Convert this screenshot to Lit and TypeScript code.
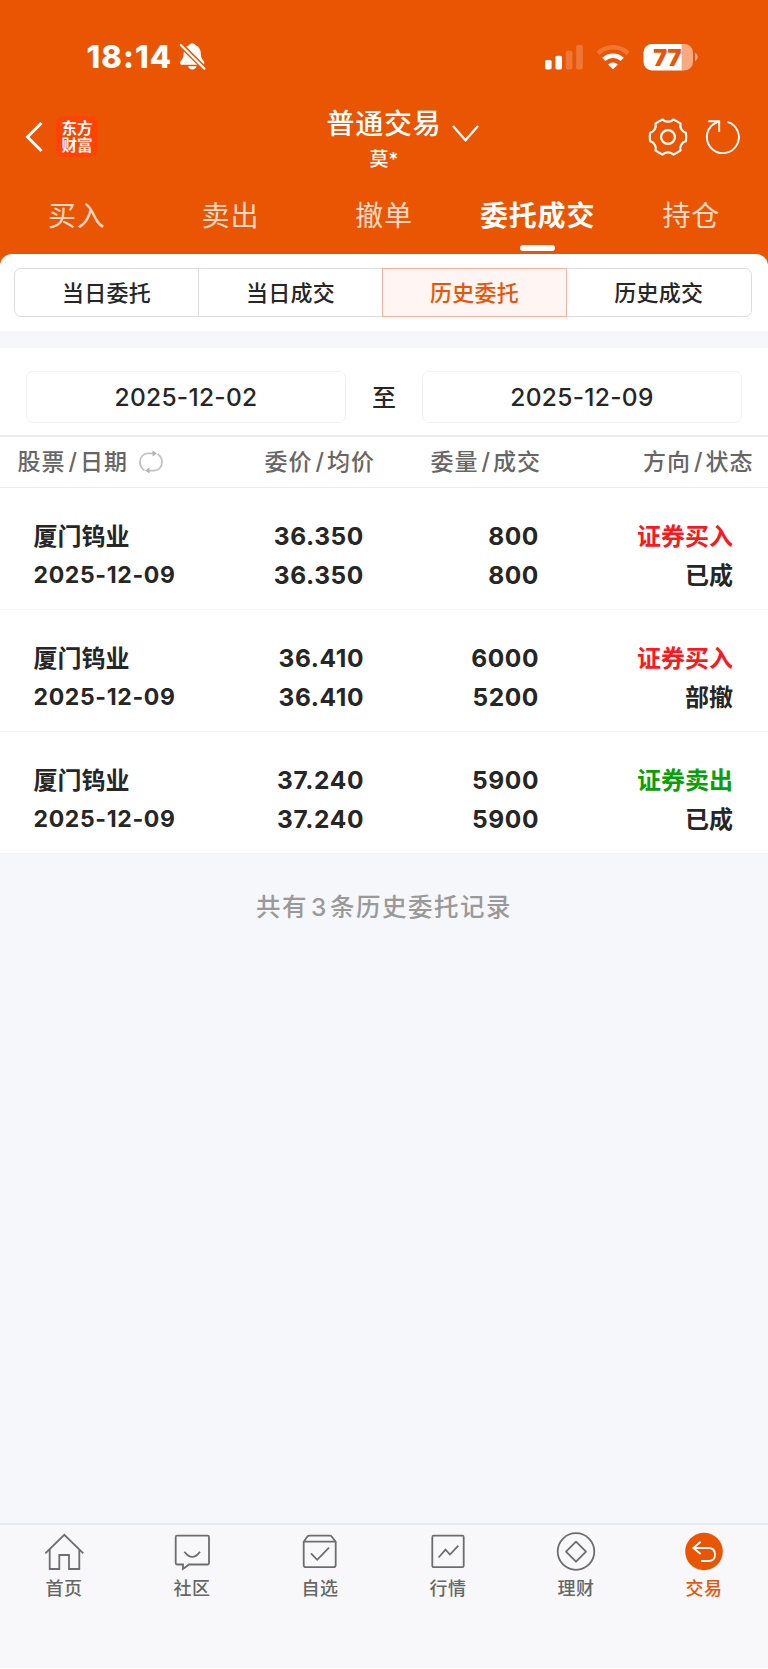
import { LitElement, html, css, svg } from "lit";
import { customElement } from "lit/decorators.js";
import { classMap } from "lit/directives/class-map.js";

const baseFont = css`
  :host {
    box-sizing: border-box;
    font-family: Inter, "Noto Sans CJK SC", sans-serif;
    white-space: nowrap;
  }
  * {
    box-sizing: border-box;
  }
  svg {
    display: block;
    flex: none;
    fill: none;
    overflow: visible;
  }
`;

/** Gear outline with six flat-topped lobes. */
const gearPath = (() => {
  const pt = (r: number, deg: number) => {
    const a = (deg * Math.PI) / 180;
    return `${(20 + r * Math.cos(a)).toFixed(2)} ${(20 + r * Math.sin(a)).toFixed(2)}`;
  };
  let d = "";
  for (let k = 0; k < 6; k++) {
    const a = k * 60;
    d += `${k ? "L" : "M"}${pt(18.4, a - 13)}Q${pt(18.4, a)} ${pt(18.4, a + 13)}`;
    d += `C${pt(16.2, a + 17)} ${pt(15.4, a + 23)} ${pt(15.4, a + 30)}`;
    d += `C${pt(15.4, a + 37)} ${pt(16.2, a + 43)} ${pt(18.4, a + 47)}`;
  }
  return d + "Z";
})();

@customElement("status-bar")
class StatusBar extends LitElement {
  static styles = [
    baseFont,
    css`
      :host {
        display: flex;
        align-items: center;
        height: 57px;
        padding: 0 69.5px 0 86.5px;
        margin-top: 28px;
        color: #fff;
      }
      .time {
        width: 87px;
        font-size: 31px;
        font-weight: 800;
        line-height: 40px;
        letter-spacing: 1.1px;
      }
      .bell {
        margin: 0 0 1px 5px;
      }
      .right {
        margin-left: auto;
        display: flex;
        align-items: center;
      }
      .wifi {
        margin-left: 13px;
      }
      .battery {
        margin-left: 13px;
      }
      .level {
        font: 900 23.500px Inter, sans-serif;
        fill: #ea5504;
      }
    `,
  ];
  render() {
    return html`
      <span class="time">18:14</span>
      <svg class="bell" width="27" height="28" viewBox="0 0 27 28">
        <path fill="#fff" d="M13.2 1.2c-1.8 0-2.8 1-3.3 2.1-3 1-5 3.6-5.200 7.200-.2 5-1 6.300-2.800 8.200-1.300 1.400-1.100 4 .9 4h20.800c2 0 2.200-2.600.9-4-1.800-1.900-2.600-3.200-2.800-8.200-.2-3.600-2.200-6.200-5.200-7.200-.5-1.100-1.500-2.100-3.300-2.100zM9 24.300h8.600c-.5 1.900-2.200 3.200-4.300 3.200S9.500 26.200 9 24.300z"/>
        <path stroke="#ea5504" stroke-width="5.200" d="M2 3.200L26 27"/>
        <path stroke="#fff" stroke-width="2.200" stroke-linecap="round" d="M1.800 3L25.400 26.600"/>
      </svg>
      <div class="right">
        <svg width="38" height="28" viewBox="0 0 38 28">
          <g fill="#fff">
            <rect y="17" width="6.600" height="9.400" rx="1.600" />
            <rect x="10.400" y="12.700" width="6.600" height="13.700" rx="1.600" />
            <rect x="20.800" y="7.700" width="6.600" height="18.700" rx="1.600" opacity=".2" />
            <rect x="31.200" y="2" width="6.600" height="24.400" rx="1.600" opacity=".2" />
          </g>
        </svg>
        <svg class="wifi" width="34" height="28" viewBox="0 0 34 28">
          <path stroke="#fff" stroke-opacity=".2" stroke-width="4.600" d="M2 10.400a21.500 21.500 0 0 1 30 0" />
          <path stroke="#fff" stroke-width="4.600" d="M7.700 16.400a13.500 13.500 0 0 1 18.600 0" />
          <path fill="#fff" d="M17 26.200l-4.900-4.700a7 7 0 0 1 9.800 0z" />
        </svg>
        <svg class="battery" width="56" height="28" viewBox="0 0 56 28">
          <defs>
            <clipPath id="cell"><rect x=".5" y="1" width="49.500" height="26.500" rx="8.500" /></clipPath>
          </defs>
          <g clip-path="url(#cell)">
            <rect x="0" y="0" width="38.800" height="28" fill="#fff" />
            <rect x="38.800" y="0" width="12" height="28" fill="#fff" fill-opacity=".5" />
          </g>
          <path fill="#fff" fill-opacity=".5" d="M52 9.600q2.800 1.600 2.800 4.400t-2.800 4.400z" />
          <text class="level" x="10.200" y="22.800">77</text>
        </svg>
      </div>
    `;
  }
}

@customElement("title-bar")
class TitleBar extends LitElement {
  static styles = [
    baseFont,
    css`
      :host {
        display: grid;
        grid-template-columns: 1fr auto 1fr;
        height: 90px;
        color: #fff;
      }
      .left,
      .right {
        display: flex;
        align-items: center;
        height: 104px;
      }
      .left {
        padding-left: 25px;
      }
      .logo {
        width: 42px;
        height: 41px;
        margin: 0 0 2px 12px;
        padding: 3px 5px 0 5.500px;
        border-radius: 8px;
        background: #ff4302;
        font: 700 15.500px/17.500px "Noto Sans CJK SC", sans-serif;
        white-space: normal;
      }
      .center {
        display: flex;
        flex-direction: column;
        align-items: center;
        padding-top: 18.500px;
      }
      .title {
        font-size: 28px;
        font-weight: 500;
        line-height: 40px;
        letter-spacing: 0.8px;
        position: relative;
      }
      .caret {
        position: absolute;
        left: 126px;
        top: 20px;
      }
      .user {
        font-size: 19px;
        font-weight: 500;
        line-height: 30px;
        margin-top: 1.500px;
      }
      .right {
        justify-content: flex-end;
        gap: 17px;
        padding-right: 27px;
      }
    `,
  ];
  render() {
    return html`
      <div class="left">
        <svg width="19" height="32" viewBox="0 0 19 32">
          <path stroke="#fff" stroke-width="3" d="M16.500 2L2.500 16L16.500 30" />
        </svg>
        <div class="logo">东方财富</div>
      </div>
      <div class="center">
        <div class="title">
          普通交易
          <svg class="caret" width="28" height="18" viewBox="0 0 28 18">
            <path stroke="#fff" stroke-width="2.300" d="M1 2L13.500 16.300L26 2" />
          </svg>
        </div>
        <div class="user">莫*</div>
      </div>
      <div class="right">
        <svg width="40" height="40" viewBox="0 0 40 40">
          <path stroke="#fff" stroke-width="2.200" stroke-linejoin="round" d=${gearPath} />
          <circle cx="20" cy="20" r="6.900" stroke="#fff" stroke-width="2.200" />
        </svg>
        <svg width="36" height="36" viewBox="0 0 36 36">
          <path stroke="#fff" stroke-width="1.900" d="M22.500 2.800A16 16 0 1 1 8.300 5.300L14 2.200M3.300 2.200H14.200V13" />
        </svg>
      </div>
    `;
  }
}

@customElement("trade-tabs")
class TradeTabs extends LitElement {
  static styles = [
    baseFont,
    css`
      :host {
        display: grid;
        grid-template-columns: repeat(5, 1fr);
        height: 79px;
      }
      .tab {
        display: flex;
        flex-direction: column;
        align-items: center;
        padding-top: 20.500px;
        font-size: 28px;
        line-height: 40px;
        letter-spacing: 0.8px;
        color: #ffdac5;
      }
      .active {
        color: #fff;
        font-weight: 700;
      }
      .active::after {
        content: "";
        width: 35px;
        height: 5.500px;
        margin-top: 9.500px;
        border-radius: 3px;
        background: #fff;
      }
    `,
  ];
  render() {
    return ["买入", "卖出", "撤单", "委托成交", "持仓"].map(
      (t, i) => html`<div class=${classMap({ tab: true, active: i === 3 })}>${t}</div>`
    );
  }
}

interface Order {
  name: string;
  date: string;
  price: string;
  avg: string;
  qty: string;
  filled: string;
  side: string;
  buy: boolean;
  status: string;
}

const orders: Order[] = [
  { name: "厦门钨业", date: "2025-12-09", price: "36.350", avg: "36.350", qty: "800", filled: "800", side: "证券买入", buy: true, status: "已成" },
  { name: "厦门钨业", date: "2025-12-09", price: "36.410", avg: "36.410", qty: "6000", filled: "5200", side: "证券买入", buy: true, status: "部撤" },
  { name: "厦门钨业", date: "2025-12-09", price: "37.240", avg: "37.240", qty: "5900", filled: "5900", side: "证券卖出", buy: false, status: "已成" },
];

@customElement("order-panel")
class OrderPanel extends LitElement {
  static styles = [
    baseFont,
    css`
      :host {
        display: block;
        color: #262626;
      }
      .sheet {
        background: #fff;
        border-radius: 12px 12px 0 0;
        padding: 14px 16.500px 14px 14px;
      }
      .segments {
        display: grid;
        grid-template-columns: 184px 184px 184px 1fr;
        grid-template-rows: 49px;
        height: 49px;
        border: 1px solid #dcdde3;
        border-radius: 7px;
      }
      .segment {
        margin-top: -1px;
        font-size: 22px;
        font-weight: 500;
        line-height: 50px;
        text-align: center;
        letter-spacing: 0.3px;
        border-right: 1px solid #dcdde3;
        height: 49px;
      }
      .segment:last-child {
        border-right: 0;
      }
      .segment.before {
        border-right-color: #f3b698;
      }
      .segment.on {
        color: #ea5504;
        background: #fff5f2;
        border: 1px solid #f3b698;
        border-left: 0;
        line-height: 48px;
      }
      .band {
        height: 17px;
        background: #f6f7fa;
      }
      .range {
        display: grid;
        grid-template-columns: 320px 1fr 320px;
        align-items: center;
        height: 87px;
        padding: 11px 26px 0 26px;
        background: #fff;
        font-size: 24.500px;
        font-weight: 500;
        line-height: 51px;
        text-align: center;
      }
      .date {
        height: 52px;
        border: 1px solid #f1f1f2;
        border-radius: 7px;
        letter-spacing: 0.3px;
      }
      .to {
        font-size: 24px;
      }
      .head {
        display: flex;
        height: 53px;
        padding-left: 17.500px;
        border-top: 2px solid #ececed;
        border-bottom: 1px solid #ececee;
        background: #fff;
        color: #666;
        font-size: 23px;
        line-height: 51px;
        font-weight: 500;
        letter-spacing: 1px;
      }
      .h1,
      .h2,
      .h3,
      .h4 {
        display: flex;
        align-items: center;
      }
      .h1 {
        width: 247px;
        gap: 11px;
      }
      .h2 {
        width: 166px;
      }
      .h3 {
        width: 212.500px;
      }
      i {
        font-style: normal;
        margin: 0 2px 0 3px;
      }
      .row {
        display: grid;
        grid-template-columns: 200px 130.500px 175px 1fr;
        height: 122px;
        padding: 28px 35px 0 33.500px;
        border-bottom: 1px solid #f2f2f3;
        background: #fff;
        font-size: 24px;
        font-weight: 700;
      }
      .row > div > div {
        height: 39px;
        line-height: 41px;
      }
      .num {
        text-align: right;
        font-size: 24.500px;
        letter-spacing: 0.6px;
      }
      .day {
        font-size: 23px;
        letter-spacing: 0.65px;
      }
      .side {
        text-align: right;
      }
      .buy {
        color: #f9191e;
      }
      .sell {
        color: #07a007;
      }
      .total {
        padding-top: 33px;
        text-align: center;
        color: #999;
        font-size: 24.500px;
        font-weight: 500;
        line-height: 40px;
        letter-spacing: 1.500px;
      }
    `,
  ];
  render() {
    const head = (a: string, b: string) => html`<span>${a}<i>/</i>${b}</span>`;
    return html`
      <div class="sheet">
        <div class="segments">
          ${["当日委托", "当日成交", "历史委托", "历史成交"].map(
            (t, i) => html`<div class=${classMap({ segment: true, before: i === 1, on: i === 2 })}>${t}</div>`
          )}
        </div>
      </div>
      <div class="band"></div>
      <div class="range">
        <div class="date">2025-12-02</div>
        <div class="to">至</div>
        <div class="date">2025-12-09</div>
      </div>
      <div class="head">
        <div class="h1">
          ${head("股票", "日期")}
          <svg width="24" height="24" viewBox="0 0 24 24">
            <path stroke="#c2c2c2" stroke-width="1.800" d="M5.500 20.500A9.700 9.700 0 0 1 1 12C1 6.800 4.400 3.400 9 3.400H16M18.500 4A9.700 9.700 0 0 1 23 12C23 17.200 19.600 20.600 15 20.600H8" />
            <path fill="#b4b4b4" d="M13.500.5L18 3.600L13.500 6.500ZM10.500 17.500L6 20.500L10.500 23.500Z" />
          </svg>
        </div>
        <div class="h2">${head("委价", "均价")}</div>
        <div class="h3">${head("委量", "成交")}</div>
        <div class="h4">${head("方向", "状态")}</div>
      </div>
      ${orders.map(
        (o) => html`<div class="row">
          <div><div>${o.name}</div><div class="day">${o.date}</div></div>
          <div class="num"><div>${o.price}</div><div>${o.avg}</div></div>
          <div class="num"><div>${o.qty}</div><div>${o.filled}</div></div>
          <div class="side"><div class=${o.buy ? "buy" : "sell"}>${o.side}</div><div>${o.status}</div></div>
        </div>`
      )}
      <div class="total">共有<i>3</i>条历史委托记录</div>
    `;
  }
}

const navItems = [
  { label: "首页", icon: svg`<path d="M1.300 21.300L20.300 2.800L39.300 21.300M5.700 17V37H15.300V23H25V37H35.300V17" />` },
  { label: "社区", icon: svg`<path d="M5.200 3.700H35.500Q37 3.700 37 5.200V31Q37 32.500 35.500 32.500H17L11 37V32.500H5.200Q3.700 32.500 3.700 31V5.200Q3.700 3.700 5.200 3.700ZM12.400 19.700Q20.300 30 28 19.700" />` },
  { label: "自选", icon: svg`<path d="M3.700 9.700L7.600 4.300Q8.200 3.600 9.200 3.600H30Q31 3.600 31.500 4.300L35.700 9.700V33Q35.700 35.200 33.500 35.200H5.900Q3.700 35.200 3.700 33ZM3.700 9.700H35.700M11 21.300L17.200 27.800L29 15.700" />` },
  { label: "行情", icon: svg`<rect x="4.300" y="3.700" width="31.400" height="31.500" rx="1.500" /><path d="M10.600 25.500L17.500 17.700L22 22.500L30.300 13.700" />` },
  { label: "理财", icon: svg`<circle cx="20" cy="19.500" r="18.300" /><path d="M20 9.700L30 19.700L20 29.700L10 19.700Z" stroke-linejoin="round" />` },
  { label: "交易", icon: svg`<circle cx="20" cy="19.500" r="18.800" fill="#ea5504" stroke="none" /><path stroke="#fff" d="M16.700 9.700L9.300 16L16.700 22M9.300 16H24.500Q31 16 31 22.500T24.500 29H17" />` },
];

@customElement("bottom-nav")
class BottomNav extends LitElement {
  static styles = [
    baseFont,
    css`
      :host {
        display: grid;
        grid-template-columns: repeat(6, 1fr);
        height: 145px;
        padding-top: 7px;
        border-top: 2px solid #e9eaee;
        background: #f8f8fb;
      }
      .item {
        display: flex;
        flex-direction: column;
        align-items: center;
        color: #666;
        font-size: 18px;
        font-weight: 500;
        line-height: 28px;
        letter-spacing: 0.600px;
      }
      .item svg {
        stroke: #6d6d6f;
        stroke-width: 1.800;
        margin-bottom: 3px;
      }
      .active {
        color: #ea5504;
      }
    `,
  ];
  render() {
    return navItems.map(
      (n, i) => html`<div class=${classMap({ item: true, active: i === 5 })}>
        <svg width="40" height="40" viewBox="0 0 40 40">${n.icon}</svg>
        <span>${n.label}</span>
      </div>`
    );
  }
}

@customElement("app-root")
class AppRoot extends LitElement {
  static styles = css`
    :host {
      display: flex;
      flex-direction: column;
      height: 1669px;
      background: #fff;
    }
    .top {
      display: flow-root;
      height: 254px;
      background: #ea5504;
    }
    .body {
      flex: 1;
      background: linear-gradient(#ea5504 16px, #f6f7fa 16px);
    }
    .nav {
      margin-bottom: 1px;
    }
  `;
  render() {
    return html`
      <div class="top">
        <status-bar></status-bar>
        <title-bar></title-bar>
        <trade-tabs></trade-tabs>
      </div>
      <order-panel class="body"></order-panel>
      <bottom-nav class="nav"></bottom-nav>
    `;
  }
}
